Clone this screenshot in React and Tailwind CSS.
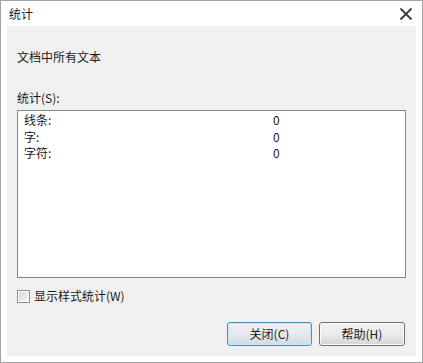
import React from "react";

const font = { fontFamily: '"Noto Sans CJK SC", "Liberation Sans", sans-serif' };

export default function App() {
  return (
    <div
      className="w-[423px] h-[363px] border border-[#a3a3a3] bg-white flex flex-col text-[12px] text-[#1a1a1a]"
      style={font}
    >
      <div className="h-[25px] flex items-center justify-between pl-[8px] pr-[9px]">
        <span className="leading-[16px]">统计</span>
        <svg width="14" height="14" viewBox="0 0 14 14" className="mt-[1px]">
          <path d="M1.5 1.5 L12.5 12.5 M12.5 1.5 L1.5 12.5" stroke="#3a3a3a" strokeWidth="1.8" fill="none" />
        </svg>
      </div>
      <div className="flex-1 mx-[6px] mb-[6px] bg-[#f0f0f0] flex flex-col pl-[10px] pr-[10px] pt-[23px] pb-[10px]">
        <div className="leading-[16px]">文档中所有文本</div>
        <div className="leading-[16px] mt-[25px]">统计(S):</div>
        <div className="mt-[4px] h-[168px] border border-[#828790] bg-white pt-[1px] pl-[6px]">
          {[
            ["线条:", "0"],
            ["字:", "0"],
            ["字符:", "0"],
          ].map(([k, v]) => (
            <div key={k} className="flex leading-[16.5px]">
              <span className="w-[249px]">{k}</span>
              <span>{v}</span>
            </div>
          ))}
        </div>
        <div className="mt-[10px] flex items-center gap-[4px]">
          <div className="w-[13px] h-[13px] border border-[#8f8f8f] bg-white p-[1px]">
            <div className="w-full h-full bg-gradient-to-br from-[#d8d8d8] to-[#f4f4f4]" />
          </div>
          <span className="leading-[16px]">显示样式统计(W)</span>
        </div>
        <div className="flex-1" />
        <div className="flex justify-end gap-[7px] pr-[1px]">
          <button
            className="w-[85px] h-[24px] rounded-[3px] border border-[#4b8fc0] shadow-[inset_0_0_0_1px_#c8e6f8] bg-gradient-to-b from-[#f0f4f7] via-[#e4e9ee] to-[#d2dbe3] flex items-center justify-center leading-[16px] p-0"
            style={font}
          >
            关闭(C)
          </button>
          <button
            className="w-[86px] h-[24px] rounded-[3px] border border-[#707070] shadow-[inset_0_0_0_1px_#fafafa] bg-gradient-to-b from-[#f2f2f2] via-[#ebebeb] to-[#d5d5d5] flex items-center justify-center leading-[16px] p-0"
            style={font}
          >
            帮助(H)
          </button>
        </div>
      </div>
    </div>
  );
}
